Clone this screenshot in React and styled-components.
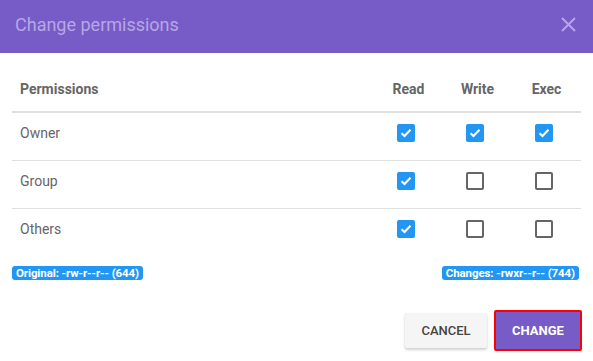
import React, { useState } from "react";
import styled, { createGlobalStyle } from "styled-components";

const Global = createGlobalStyle`
  html, body { margin: 0; padding: 0; background: #fff; }
  body { font-family: Roboto, "Noto Sans", Arial, sans-serif; }
  * { box-sizing: border-box; }
`;

const Dialog = styled.div`
  width: 593px;
  height: 361px;
  display: flex;
  flex-direction: column;
  background: #fff;
`;

const Header = styled.div`
  height: 53px;
  background: #775bc7;
  display: flex;
  align-items: center;
  justify-content: space-between;
  padding: 0 16px 4px 15px;
`;

const Title = styled.h2`
  margin: 0;
  font-size: 18px;
  font-weight: 400;
  color: #b6a7e4;
`;

const CloseButton = styled.button`
  border: 0;
  background: none;
  padding: 0;
  width: 18px;
  height: 18px;
  display: flex;
  align-items: center;
  justify-content: center;
  cursor: pointer;
`;

const Body = styled.div`
  padding: 5px 12px 0 12px;
`;

const Table = styled.table`
  width: 100%;
  border-collapse: collapse;
`;

const HeadCell = styled.th`
  height: 54px;
  padding: 8px 8px 0 8px;
  font-size: 14px;
  font-weight: 700;
  color: #666;
  text-align: ${(p) => (p.$center ? "center" : "left")};
  width: ${(p) => (p.$center ? "69px" : "auto")};
  border-bottom: 2px solid #e0e0e0;
`;

const Row = styled.tr`
  border-bottom: ${(p) => (p.$last ? "0" : "1px solid #e0e0e0")};
`;

const Cell = styled.td`
  height: 48px;
  padding: 0 8px 6px 8px;
  font-size: 14px;
  color: #666;
  text-align: ${(p) => (p.$center ? "center" : "left")};
  vertical-align: middle;
`;

const Box = styled.span`
  display: inline-flex;
  vertical-align: middle;
  align-items: center;
  justify-content: center;
  width: 18px;
  height: 18px;
  border-radius: 2px;
  margin-right: 6px;
  background: ${(p) => (p.$checked ? "#2196f3" : "transparent")};
  border: ${(p) => (p.$checked ? "0" : "2px solid #666")};
  cursor: pointer;
`;

const Badges = styled.div`
  display: flex;
  justify-content: space-between;
  align-items: center;
  margin-top: 10px;
  padding-right: 2px;
`;

const Badge = styled.span`
  display: inline-flex;
  align-items: center;
  height: 14px;
  padding: 0 4px;
  border-radius: 3px;
  background: #2196f3;
  color: #fff;
  font-size: 11.5px;
  font-weight: 700;
  letter-spacing: -0.1px;
  white-space: nowrap;
`;

const Actions = styled.div`
  display: flex;
  justify-content: flex-end;
  align-items: center;
  gap: 7px;
  padding: 30px 11px 0 0;
`;

const Button = styled.button`
  font-family: Roboto, Arial, sans-serif;
  font-size: 13px;
  font-weight: ${(p) => (p.$primary ? 700 : 500)};
  text-transform: uppercase;
  height: ${(p) => (p.$primary ? "41px" : "35px")};
  min-width: ${(p) => (p.$primary ? "88px" : "82px")};
  padding: 0 14px;
  border-radius: 2px;
  cursor: pointer;
  color: ${(p) => (p.$primary ? "#fff" : "#444")};
  background: ${(p) => (p.$primary ? "#775bc7" : "#f5f5f5")};
  border: ${(p) => (p.$primary ? "2px solid #ff0000" : "0")};
  box-shadow: ${(p) =>
    p.$primary ? "none" : "0 2px 3px rgba(0,0,0,0.18), 0 0 1px rgba(0,0,0,0.1)"};
`;

const Check = () => (
  <svg width="12" height="10" viewBox="0 0 12 10">
    <path d="M1.5 5.2 L4.5 8 L10.5 1.8" fill="none" stroke="#fff" strokeWidth="2" />
  </svg>
);

const initial = {
  Owner: [true, true, true],
  Group: [true, false, false],
  Others: [true, false, false],
};

export default function App() {
  const [perms, setPerms] = useState(initial);
  const toggle = (who, i) =>
    setPerms((p) => ({ ...p, [who]: p[who].map((v, j) => (j === i ? !v : v)) }));
  const names = Object.keys(perms);
  return (
    <Dialog>
      <Global />
      <Header>
        <Title>Change permissions</Title>
        <CloseButton aria-label="close">
          <svg width="15" height="15" viewBox="0 0 15 15">
            <path d="M1 1 L14 14 M14 1 L1 14" stroke="#b6a7e4" strokeWidth="2" />
          </svg>
        </CloseButton>
      </Header>
      <Body>
        <Table>
          <thead>
            <tr>
              <HeadCell>Permissions</HeadCell>
              <HeadCell $center>Read</HeadCell>
              <HeadCell $center>Write</HeadCell>
              <HeadCell $center>Exec</HeadCell>
            </tr>
          </thead>
          <tbody>
            {names.map((n, ri) => (
              <Row key={n} $last={ri === names.length - 1}>
                <Cell>{n}</Cell>
                {perms[n].map((v, i) => (
                  <Cell $center key={i}>
                    <Box $checked={v} onClick={() => toggle(n, i)}>
                      {v && <Check />}
                    </Box>
                  </Cell>
                ))}
              </Row>
            ))}
          </tbody>
        </Table>
        <Badges>
          <Badge>Original: -rw-r--r-- (644)</Badge>
          <Badge>Changes: -rwxr--r-- (744)</Badge>
        </Badges>
      </Body>
      <Actions>
        <Button>Cancel</Button>
        <Button $primary>Change</Button>
      </Actions>
    </Dialog>
  );
}
